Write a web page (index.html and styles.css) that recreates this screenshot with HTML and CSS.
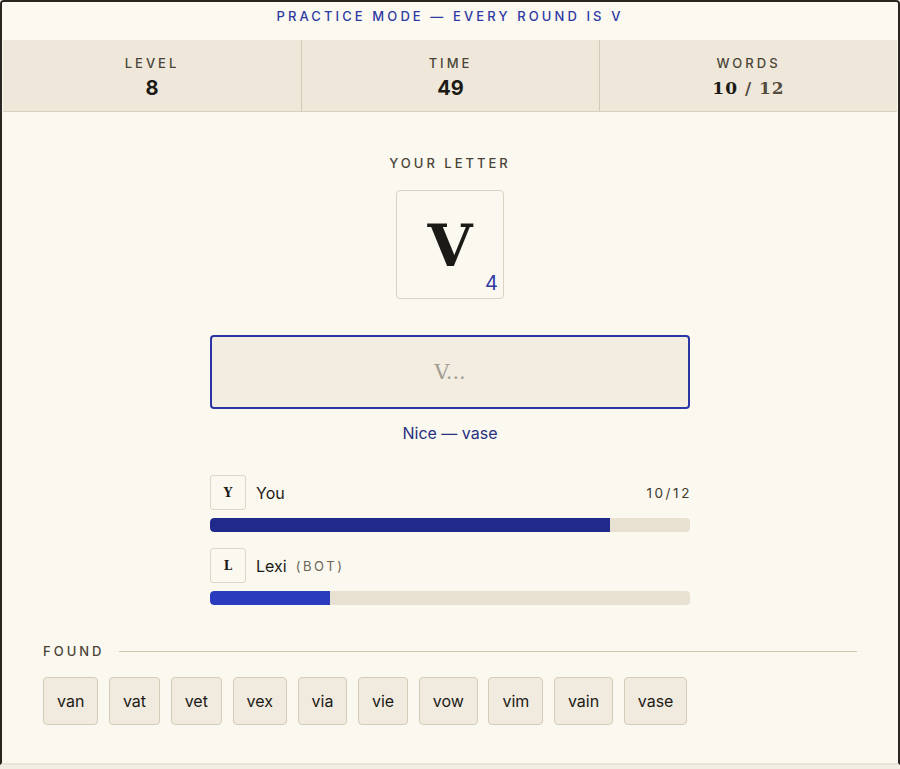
FILE: index.html
```html
<!DOCTYPE html>
<html>
<head>
<meta charset="utf-8">
<link rel="stylesheet" href="styles.css">
</head>
<body>
<div class="frame">
  <div class="mode">PRACTICE MODE — EVERY ROUND IS V</div>
  <div class="stats">
    <div class="stat"><div class="stat-label">LEVEL</div><div class="stat-value">8</div></div>
    <div class="stat"><div class="stat-label">TIME</div><div class="stat-value">49</div></div>
    <div class="stat"><div class="stat-label">WORDS</div><div class="stat-value serif"><span class="strong">10</span> <span class="muted">/ 12</span></div></div>
  </div>
  <div class="main">
    <div class="letter-label">YOUR LETTER</div>
    <div class="tile"><span class="tile-letter">V</span><span class="tile-score">4</span></div>
    <div class="input"><span class="placeholder">V...</span></div>
    <div class="feedback">Nice — vase</div>
    <div class="players">
      <div class="player">
        <div class="player-head">
          <div class="avatar">Y</div>
          <div class="name">You</div>
          <div class="count">10/12</div>
        </div>
        <div class="track"><div class="fill fill-you" style="width:83.33%"></div></div>
      </div>
      <div class="player">
        <div class="player-head">
          <div class="avatar">L</div>
          <div class="name">Lexi</div>
          <div class="bot">(BOT)</div>
        </div>
        <div class="track"><div class="fill fill-bot" style="width:25%"></div></div>
      </div>
    </div>
  </div>
  <div class="found">
    <div class="found-head"><span class="found-label">FOUND</span><span class="rule"></span></div>
    <div class="chips">
      <span class="chip">van</span><span class="chip">vat</span><span class="chip">vet</span><span class="chip">vex</span><span class="chip">via</span><span class="chip">vie</span><span class="chip">vow</span><span class="chip">vim</span><span class="chip">vain</span><span class="chip">vase</span>
    </div>
  </div>
</div>
</body>
</html>
```
FILE: styles.css
```css
html, body {
  margin: 0;
  padding: 0;
  background: #f3eee3;
}
body {
  font-family: Inter, "Open Sans", "Liberation Sans", sans-serif;
  color: #1c1a16;
}
.frame {
  box-sizing: border-box;
  width: 900px;
  height: 765px;
  border: 2px solid #2a2621;
  border-bottom-color: #ebe5d8;
  border-radius: 4px 4px 0 0;
  background: #fbf8ef;
  overflow: hidden;
}
.mode {
  height: 38px;
  box-sizing: border-box;
  padding-top: 6px;
  line-height: 16px;
  text-align: center;
  font-size: 13px;
  font-weight: 500;
  letter-spacing: 3.1px;
  color: #2e3aa4;
  background: #fcf9f1;
}
.stats {
  display: grid;
  grid-template-columns: 1fr 1fr 1fr;
  background: #efe8da;
  border-bottom: 1px solid #d8cfbc;
  margin: 0 1px;
}
.stat {
  padding: 15px 0 11px;
  text-align: center;
  border-left: 1px solid #d3cab7;
}
.stat:first-child { border-left: none; }
.stat-label {
  font-size: 13px;
  line-height: 16px;
  letter-spacing: 3px;
  color: #4a4438;
  font-weight: 500;
}
.stat-value {
  margin-top: 5px;
  font-size: 20px;
  line-height: 24px;
  font-weight: 700;
  color: #1c1a16;
}
.stat-value.serif {
  font-family: "DejaVu Serif", serif;
  font-size: 17px;
  letter-spacing: 1px;
}
.stat-value .muted { color: #554d42; }
.main {
  display: flex;
  flex-direction: column;
  align-items: center;
  padding-top: 43px;
}
.letter-label {
  font-size: 13px;
  line-height: 16px;
  letter-spacing: 3px;
  color: #4a4438;
  font-weight: 500;
}
.tile {
  position: relative;
  margin-top: 19px;
  width: 108px;
  height: 109px;
  box-sizing: border-box;
  border: 1px solid #dad3c3;
  border-radius: 4px;
  background: #fbf8ef;
  display: flex;
  align-items: center;
  justify-content: center;
}
.tile-letter {
  font-family: "DejaVu Serif", serif;
  font-weight: 700;
  font-size: 58px;
  line-height: 1;
  color: #1c1a16;
  margin-top: 2px;
}
.tile-score {
  position: absolute;
  right: 5px;
  bottom: 5px;
  font-size: 20px;
  line-height: 20px;
  color: #2e3aa4;
}
.input {
  margin-top: 36px;
  width: 480px;
  height: 74px;
  box-sizing: border-box;
  border: 2px solid #2a35a3;
  border-radius: 4px;
  background: #f3ede1;
  display: flex;
  align-items: center;
  justify-content: center;
}
.placeholder {
  font-family: "DejaVu Serif", serif;
  font-size: 21px;
  color: #a39d91;
}
.feedback {
  margin-top: 14px;
  font-size: 16px;
  line-height: 20px;
  color: #27317f;
}
.players {
  margin-top: 32px;
  width: 480px;
  display: flex;
  flex-direction: column;
  gap: 16px;
}
.player-head {
  display: flex;
  align-items: center;
  height: 35px;
}
.avatar {
  width: 36px;
  height: 35px;
  box-sizing: border-box;
  border: 1px solid #ddd6c6;
  border-radius: 3px;
  background: #fbf8ef;
  display: flex;
  align-items: center;
  justify-content: center;
  font-family: "DejaVu Serif", serif;
  font-weight: 700;
  font-size: 12px;
}
.name {
  margin-left: 10px;
  font-size: 16px;
  color: #1c1a16;
}
.count {
  margin-left: auto;
  font-size: 13.5px;
  letter-spacing: 2.6px;
  margin-right: -2px;
  color: #3f3a31;
}
.bot {
  margin-left: 9px;
  font-size: 13px;
  letter-spacing: 2.6px;
  color: #6b6459;
}
.track {
  margin-top: 8px;
  height: 14px;
  border-radius: 4px;
  background: #e8e1d1;
  overflow: hidden;
}
.fill { height: 100%; border-radius: 4px 0 0 4px; }
.fill-you { background: #1f2a8c; }
.fill-bot { background: #2a3bbd; }
.found {
  padding: 0 41px 0 41px;
  margin-top: 38px;
}
.found-head {
  display: flex;
  align-items: center;
  gap: 15px;
}
.found-label {
  font-size: 13px;
  line-height: 16px;
  letter-spacing: 3px;
  color: #4a4438;
  font-weight: 500;
}
.rule {
  flex: 1;
  height: 1px;
  background: #cfc6b2;
}
.chips {
  margin-top: 18px;
  display: flex;
  gap: 10.6px;
}
.chip {
  height: 48px;
  box-sizing: border-box;
  padding: 0 13px;
  border: 1px solid #d4ccb9;
  border-radius: 4px;
  background: #f1ebdf;
  display: flex;
  align-items: center;
  font-size: 16px;
  color: #1c1a16;
}
```
